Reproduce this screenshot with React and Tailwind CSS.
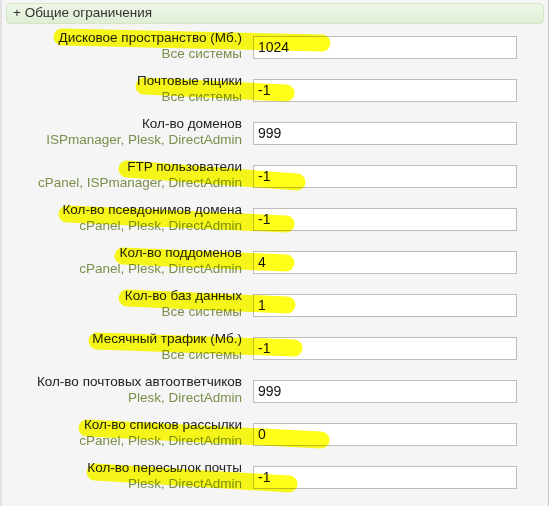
import React from 'react';

const ROWS = [
  { label: 'Дисковое пространство (Мб.)', sys: 'Все системы', value: '1024' },
  { label: 'Почтовые ящики', sys: 'Все системы', value: '-1' },
  { label: 'Кол-во доменов', sys: 'ISPmanager, Plesk, DirectAdmin', value: '999' },
  { label: 'FTP пользователи', sys: 'cPanel, ISPmanager, DirectAdmin', value: '-1' },
  { label: 'Кол-во псевдонимов домена', sys: 'cPanel, Plesk, DirectAdmin', value: '-1' },
  { label: 'Кол-во поддоменов', sys: 'cPanel, Plesk, DirectAdmin', value: '4' },
  { label: 'Кол-во баз данных', sys: 'Все системы', value: '1' },
  { label: 'Месячный трафик (Мб.)', sys: 'Все системы', value: '-1' },
  { label: 'Кол-во почтовых автоответчиков', sys: 'Plesk, DirectAdmin', value: '999' },
  { label: 'Кол-во списков рассылки', sys: 'cPanel, Plesk, DirectAdmin', value: '0' },
  { label: 'Кол-во пересылок почты', sys: 'Plesk, DirectAdmin', value: '-1' },
];

// marker strokes drawn over the screenshot
const MARKS = [
  'M62 37 L322 43',
  'M144 86 L286 93',
  'M127 169 L297 182',
  'M67 214 L286 224',
  'M123 256 L286 263',
  'M127 298 L287 305',
  'M97 341 L294 348',
  'M87 428 L321 440',
  'M95 472 L289 484',
];

export default function App() {
  return (
    <div className="relative h-[506px] w-[552px] bg-white font-['Liberation_Sans',Arial,sans-serif]">
      <div className="h-full w-[549px] border-l-2 border-r border-l-[#e2e2e2] border-r-[#c8c8c8] bg-[#f5f5f5] pt-[3px]">
        <div className="mx-[4px] flex h-[21px] items-center rounded-[4px] border border-[#d4e6c4] bg-gradient-to-b from-[#eef6e7] to-[#dfeed3] pl-[6px] text-[13.5px] text-[#333]">
          + Общие ограничения
        </div>

        <div className="mt-[4px] flex flex-col">
          {ROWS.map((r) => (
            <div key={r.label} className="flex h-[43px] items-start">
              <div className="mt-[2px] w-[241px] pr-[1px] text-right text-[13.5px] leading-[16px]">
                <div className="text-[#222]">{r.label}</div>
                <div className="text-[#7b8f4c]">{r.sys}</div>
              </div>
              <div className="ml-[10px] mt-[8px] flex h-[23px] w-[264px] items-center border border-[#bdbdbd] bg-white pl-[4px] text-[14px] text-[#111]">
                {r.value}
              </div>
            </div>
          ))}
        </div>
      </div>

      <svg className="pointer-events-none absolute left-0 top-0 mix-blend-multiply" width="552" height="506">
        {MARKS.map((d) => (
          <path key={d} d={d} stroke="#ffff1a" strokeWidth="17" strokeLinecap="round" fill="none" />
        ))}
      </svg>
    </div>
  );
}
